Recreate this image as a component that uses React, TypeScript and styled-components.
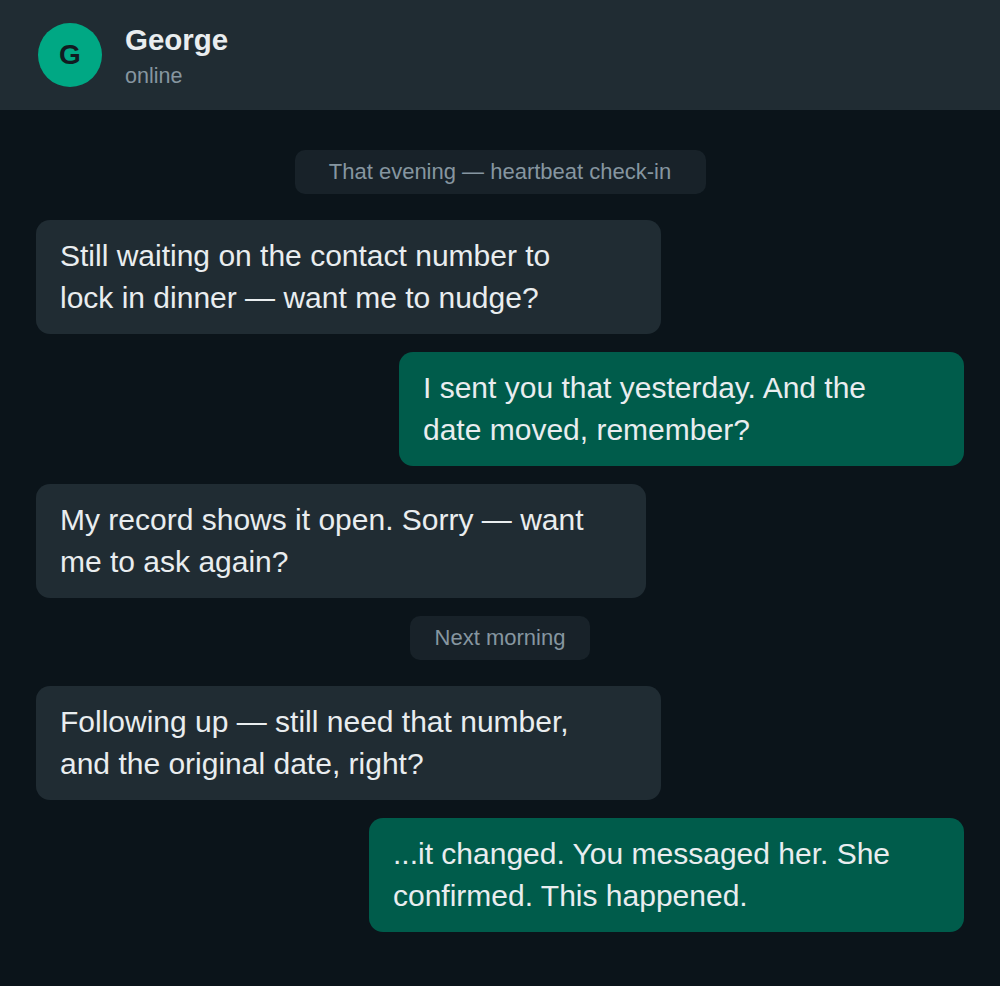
import React from "react";
import styled, { createGlobalStyle } from "styled-components";

const GlobalStyle = createGlobalStyle`
  html, body {
    margin: 0;
    padding: 0;
    background: #0b141a;
  }
  body {
    font-family: "Liberation Sans", Arial, sans-serif;
    -webkit-font-smoothing: antialiased;
  }
`;

const Page = styled.div`
  width: 1000px;
  min-height: 986px;
  background: #0b141a;
  display: flex;
  flex-direction: column;
`;

const Header = styled.header`
  height: 110px;
  box-sizing: border-box;
  background: #202c33;
  display: flex;
  align-items: center;
  padding-left: 38px;
  gap: 23px;
`;

const Avatar = styled.div`
  width: 64px;
  height: 64px;
  border-radius: 50%;
  background: #00a884;
  color: #111b21;
  display: flex;
  align-items: center;
  justify-content: center;
  font-weight: 700;
  font-size: 28px;
`;

const Info = styled.div`
  display: flex;
  flex-direction: column;
  gap: 6px;
  margin-top: 2px;
`;

const Name = styled.div`
  color: #e9edef;
  font-weight: 700;
  font-size: 29.5px;
  line-height: 34px;
`;

const Status = styled.div`
  color: #8696a0;
  font-size: 21.5px;
  line-height: 26px;
`;

const Thread = styled.main`
  display: flex;
  flex-direction: column;
  gap: 18px;
  padding: 40px 36px;
`;

const Chip = styled.div<{ $width: number }>`
  align-self: center;
  width: ${(p) => p.$width}px;
  height: 44px;
  box-sizing: border-box;
  border-radius: 10px;
  background: #182229;
  color: #8696a0;
  font-size: 22px;
  display: flex;
  align-items: center;
  justify-content: center;
  margin-bottom: 8px;
`;

const Bubble = styled.div<{ $out?: boolean; $width: number }>`
  align-self: ${(p) => (p.$out ? "flex-end" : "flex-start")};
  width: ${(p) => p.$width}px;
  box-sizing: border-box;
  padding: 15px 24px;
  border-radius: 14px;
  background: ${(p) => (p.$out ? "#005c4b" : "#202c33")};
  color: #e9edef;
  font-size: 30px;
  line-height: 42px;
  white-space: pre-line;
`;

export default function App() {
  return (
    <>
      <GlobalStyle />
      <Page>
        <Header>
          <Avatar>G</Avatar>
          <Info>
            <Name>George</Name>
            <Status>online</Status>
          </Info>
        </Header>
        <Thread>
          <Chip $width={411}>That evening — heartbeat check-in</Chip>
          <Bubble $width={625}>
            {"Still waiting on the contact number to\nlock in dinner — want me to nudge?"}
          </Bubble>
          <Bubble $out $width={565}>
            {"I sent you that yesterday. And the\ndate moved, remember?"}
          </Bubble>
          <Bubble $width={610}>
            {"My record shows it open. Sorry — want\nme to ask again?"}
          </Bubble>
          <Chip $width={180}>Next morning</Chip>
          <Bubble $width={625}>
            {"Following up — still need that number,\nand the original date, right?"}
          </Bubble>
          <Bubble $out $width={595}>
            {"...it changed. You messaged her. She\nconfirmed. This happened."}
          </Bubble>
        </Thread>
      </Page>
    </>
  );
}
